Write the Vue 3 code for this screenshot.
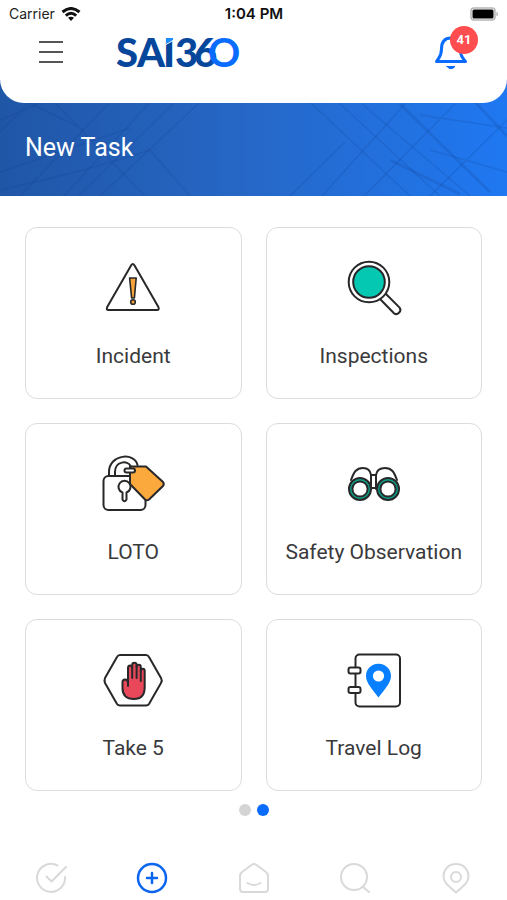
<template>
  <div class="app">
    <div class="top">
      <svg class="top-lines" viewBox="0 0 507 196" preserveAspectRatio="none" aria-hidden="true">
        <g class="dark" fill="none">
          <path d="M-10 142 L36 96 M0 120 L60 95 M20 196 L110 102 M64 196 L150 102 M78 196 L175 102 M100 196 L200 102" />
          <path d="M56 104 L145 196 M84 130 L20 98 M0 190 Q90 170 150 150 M148 148 L190 196 M0 172 L130 128" />
          <path d="M310 102 L410 196 M338 102 L440 196 M362 104 L470 196" />
          <path class="thick" d="M400 104 L490 192 M390 160 L460 194 M475 102 L507 136" />
          <path d="M290 196 L345 142 M322 196 L405 104 M364 196 L455 104 M430 196 L507 120 M420 115 L507 128 M430 150 L507 172" />
        </g>
      </svg>
      <header class="header">
        <div class="status">
          <div class="carrier">
            <span>Carrier</span>
            <svg width="20" height="14" viewBox="0 0 20 14" fill="none" stroke="#111" stroke-width="3" aria-hidden="true">
              <path d="M1.5 5 Q10 -2 18.5 5" />
              <path d="M4.8 8.6 Q10 4 15.2 8.6" />
              <path d="M7 10.8 Q10 8.6 13 10.8 L10 14Z" fill="#111" stroke="none" />
            </svg>
          </div>
          <span class="clock">1:04 PM</span>
          <svg class="battery" width="29" height="14" viewBox="0 0 29 14" aria-hidden="true">
            <rect x="1" y="1" width="24" height="12" rx="3" fill="#fff" stroke="#b5b5b5" stroke-width="1.5" />
            <rect x="2.5" y="2.5" width="21" height="9" rx="1.5" fill="#000" />
            <path d="M26.5 4.5 Q29.5 7 26.5 9.5Z" fill="#aaa" />
          </svg>
        </div>
        <div class="bar">
          <button class="icon-btn" aria-label="Menu">
            <svg width="24" height="24" viewBox="0 0 24 24" stroke="#555" stroke-width="2" aria-hidden="true">
              <path d="M0 2 H24 M0 12 H24 M0 22 H24" />
            </svg>
          </button>
          <svg class="logo" width="126" height="50" viewBox="0 0 126 50" role="img" aria-label="SAI360">
            <defs>
              <linearGradient id="six" x1="0" x2="1">
                <stop offset="0" stop-color="#07479b" />
                <stop offset="0.6" stop-color="#07479b" />
                <stop offset="1" stop-color="#0558c8" />
              </linearGradient>
            </defs>
            <text y="40" fill="#07479b"><tspan x="-1">S</tspan><tspan x="20">A</tspan><tspan x="46">I</tspan><tspan x="58">3</tspan></text>
            <text x="77" y="40" fill="url(#six)">6</text>
            <text class="logo-ring" x="91" y="40" fill="#0a6cff">O</text>
            <path d="M49 11 H56 V13 L49 17Z" fill="#1e8dff" />
            <path d="M49 17 L56 13 V14 L49 18Z" fill="#fff" />
          </svg>
          <button class="icon-btn bell" aria-label="Notifications">
            <svg width="34" height="36" viewBox="0 0 34 36" fill="none" stroke="#0a6cff" stroke-width="3" stroke-linecap="round" stroke-linejoin="round" aria-hidden="true">
              <path d="M17 4 C10 4 7.5 9 7.5 15 C7.5 22 5.5 23 2.5 27.5 H31.5 C28 23 26.5 22 26.5 15 C26.5 9 24 4 17 4Z" />
              <path d="M13 32.5 H21 Q17 37 13 32.5Z" fill="#0a6cff" stroke-width="1" />
            </svg>
            <span class="badge">41</span>
          </button>
        </div>
      </header>
      <h1 class="title">New Task</h1>
    </div>

    <main class="grid">
      <button v-for="task in tasks" :key="task.id" class="card">
        <svg width="88" height="80" viewBox="0 0 88 80" fill="none" stroke="#28282a" stroke-width="2" stroke-linejoin="round" stroke-linecap="round" aria-hidden="true">
          <template v-if="task.id === 'incident'">
            <path d="M42.2 15.2 Q43.8 12.8 45.4 15.2 L69.4 57 Q70.5 60 68 60 H19.5 Q17 60 18.2 57Z" />
            <path d="M40.6 28 H47.2 L45.4 48 H42.6Z" fill="#f5a33b" stroke-width="1.6" />
            <circle cx="44" cy="52" r="2.3" fill="#f5a33b" stroke-width="1.6" />
          </template>
          <template v-else-if="task.id === 'inspections'">
            <circle cx="39" cy="32" r="20.3" />
            <circle cx="39" cy="32" r="15.8" fill="#05c8b3" />
            <path d="M50.5 49.5 L64 63.2 Q66.5 65.2 69 62.8 Q71.6 60.2 69.6 57.6 L56 44" />
          </template>
          <template v-else-if="task.id === 'loto'">
            <path d="M20 30 V26 C20 8 46 6 48.5 19 M26 30 V26 C26 15 39 14 41.5 20" />
            <rect x="14.5" y="30" width="42" height="34" rx="5" fill="#fff" />
            <path d="M33.5 46.5 A6 6 0 1 1 37.5 46.5 V53.5 Q35.5 57 33.5 53.5Z" />
            <path d="M41 20.5 H57 L74 36 Q75.5 38 74 40 L60 53.5 Q58 55 56 53.5 L41 38Z" fill="#fba83c" />
            <rect x="35.5" y="22.5" width="10.5" height="4" rx="2" fill="#fff" />
          </template>
          <template v-else-if="task.id === 'safety'">
            <path d="M21 34 C24 26 26 22 33 22 Q40 22 41 29 V43 M67 34 C64 26 62 22 55 22 Q47 22 46 29 V43 M41 29 H46 M41 42 H46" />
            <circle cx="30" cy="43" r="11" fill="#0b9f87" />
            <circle cx="58" cy="43" r="11" fill="#0b9f87" />
            <circle cx="30" cy="43" r="7.6" fill="#fff" />
            <circle cx="58" cy="43" r="7.6" fill="#fff" />
          </template>
          <template v-else-if="task.id === 'take5'">
            <path d="M31 13 H57 Q59 13 60 15 L72 36 Q73.5 38.5 72 41 L60 62 Q59 63.5 57 63.5 H31 Q29 63.5 28 62 L16 41 Q15 38.5 16 36 L28 15 Q29 13 31 13Z" />
            <path d="M39 44 V26 Q39 23.5 41 23.5 Q43.2 23.5 43.2 26 V23 Q43.2 20.8 45.3 20.8 Q47.6 20.8 47.6 23 V25 Q47.6 22.8 49.8 22.8 Q51.8 22.8 51.8 25 V29 Q52 26.8 53.8 26.8 Q55.7 26.8 55.7 29 V45 Q55.7 57 45 57 Q33.5 57 33.5 46 V40 Q33.5 37.5 36 37.5 Q39 37.5 39 41" fill="#e9485b" />
            <path d="M43.2 26 V36 M47.6 24 V36 M51.8 28 V39" />
          </template>
          <template v-else>
            <rect x="25.5" y="12.5" width="44.5" height="52" rx="4" />
            <path d="M48.5 21.8 C41 21.8 36 27.5 36 34 C36 41 43 48 48.5 55.5 C54 48 61 41 61 34 C61 27.5 56 21.8 48.5 21.8Z" fill="#087fff" stroke="none" />
            <circle cx="48.5" cy="34" r="5.6" fill="#fff" stroke="none" />
            <rect x="18.5" y="25.5" width="12" height="6" rx="2" fill="#fff" />
            <rect x="18.5" y="45" width="12" height="6" rx="2" fill="#fff" />
          </template>
        </svg>
        <span class="card-label">{{ task.label }}</span>
      </button>
    </main>

    <div class="dots">
      <button
        v-for="n in 2"
        :key="n"
        class="dot"
        :class="{ active: n === page }"
        :aria-label="'Page ' + n"
        @click="page = n"
      ></button>
    </div>

    <nav class="tabs">
      <button
        v-for="tab in tabs"
        :key="tab.name"
        class="tab"
        :class="{ active: tab.name === activeTab }"
        :aria-label="tab.name"
        @click="activeTab = tab.name"
      >
        <svg width="32" height="32" viewBox="0 0 32 32" fill="none" stroke="currentColor" stroke-linecap="round" stroke-linejoin="round" aria-hidden="true">
          <path v-for="d in tab.paths" :key="d" :d="d" />
        </svg>
      </button>
    </nav>
  </div>
</template>

<script setup>
import { ref } from 'vue'

const page = ref(2)
const activeTab = ref('Add')

const tasks = [
  { id: 'incident', label: 'Incident' },
  { id: 'inspections', label: 'Inspections' },
  { id: 'loto', label: 'LOTO' },
  { id: 'safety', label: 'Safety Observation' },
  { id: 'take5', label: 'Take 5' },
  { id: 'travel', label: 'Travel Log' }
]

const tabs = [
  { name: 'Tasks', paths: ['M22.5 3.5 A14 14 0 1 0 30 15', 'M11.5 14.5 L16.5 19.5 L31 5'] },
  { name: 'Add', paths: ['M16 2 A14 14 0 1 1 16 30 A14 14 0 1 1 16 2Z', 'M16 11 V21 M11 16 H21'] },
  { name: 'Home', paths: ['M4 10 L13.5 3 Q16 1 18.5 3 L28 10 Q30 12 30 14 V27 Q30 30 27 30 H5 Q2 30 2 27 V14 Q2 12 4 10', 'M9.5 21 Q16 25 22.5 21'] },
  { name: 'Search', paths: ['M15 2 A13 13 0 1 1 15 28 A13 13 0 1 1 15 2Z', 'M24 25 L30 30'] },
  { name: 'Location', paths: ['M16 2 C8 2 3.5 8 3.5 14.5 C3.5 21 10 25 16 30.5 C22 25 28.5 21 28.5 14.5 C28.5 8 24 2 16 2Z', 'M16 10 A5 5 0 1 1 16 20 A5 5 0 1 1 16 10Z'] }
]
</script>

<style>
body {
  margin: 0;
  background: #fff;
}
</style>

<style scoped>
.app {
  min-height: 100vh;
  display: flex;
  flex-direction: column;
  font-family: Roboto, sans-serif;
  color: #3a3a3c;
}
button {
  padding: 0;
  border: none;
  background: none;
  font-family: inherit;
  color: inherit;
  cursor: pointer;
}
svg {
  display: block;
}
.top {
  position: relative;
  background: linear-gradient(90deg, #2056a6, #2667c6 48%, #1f78f2);
}
.top-lines {
  position: absolute;
  inset: 0;
  width: 100%;
  height: 100%;
}
.dark {
  stroke: #123f8c;
  stroke-opacity: 0.18;
  stroke-width: 1.5;
}
.thick {
  stroke-width: 3;
}
.header {
  position: relative;
  height: 103px;
  background: #fff;
  border-radius: 0 0 24px 24px;
}
.status {
  display: grid;
  grid-template-columns: 1fr auto 1fr;
  align-items: center;
  height: 27px;
  padding: 0 8px 0 9px;
  font-family: Inter, sans-serif;
  font-size: 14px;
  color: #222;
}
.carrier {
  display: flex;
  align-items: center;
  gap: 6px;
}
.clock {
  font-size: 15px;
  font-weight: 600;
  color: #111;
}
.battery {
  justify-self: end;
}
.bar {
  display: grid;
  grid-template-columns: 78px 1fr auto;
  align-items: center;
  height: 50px;
  padding: 0 39px;
}
.logo {
  overflow: visible;
}
.logo text {
  font-family: Lato, sans-serif;
  font-size: 40px;
  font-weight: 900;
}
.logo .logo-ring {
  font-weight: 700;
}
.bell {
  position: relative;
}
.badge {
  position: absolute;
  top: -8px;
  right: -10px;
  width: 28px;
  height: 28px;
  border-radius: 50%;
  background: #ff4d50;
  color: #fff;
  font-size: 13px;
  font-weight: 700;
  line-height: 28px;
}
.title {
  position: relative;
  margin: 0;
  padding: 29px 25px 32px;
  font-size: 25px;
  font-weight: 400;
  line-height: 32px;
  color: #fff;
}
.grid {
  display: grid;
  grid-template-columns: 1fr 1fr;
  gap: 24px;
  padding: 31px 25px 13px;
}
.card {
  display: flex;
  flex-direction: column;
  align-items: center;
  gap: 14px;
  box-sizing: border-box;
  min-height: 172px;
  padding: 22px 4px;
  border: 1px solid #dcdcdc;
  border-radius: 12px;
  background: #fff;
}
.card-label {
  font-size: 21px;
  line-height: 24px;
}
.dots {
  display: flex;
  justify-content: center;
  gap: 6px;
}
.dot {
  width: 12px;
  height: 12px;
  border-radius: 50%;
  background: #d4d4d4;
}
.dot.active {
  background: #0a6cff;
}
.tabs {
  display: flex;
  margin-top: auto;
  padding-bottom: 6px;
}
.tab {
  flex: 1;
  display: flex;
  justify-content: center;
  color: #d9d9d9;
  stroke-width: 2;
}
.tab.active {
  color: #0a66f0;
  stroke-width: 2.5;
}
</style>
